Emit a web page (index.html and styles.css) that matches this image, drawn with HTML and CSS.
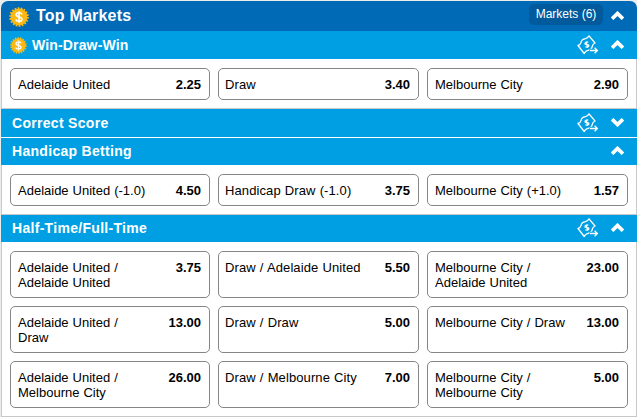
FILE: index.html
```html
<!DOCTYPE html>
<html lang="en">

<head>
    <meta charset="UTF-8">
    <meta name="viewport" content="width=device-width, initial-scale=1.0">
    <title>Top Markets</title>
    <link rel="stylesheet" href="styles.css">
</head>

<body>
    <!-- Shared icons -->
    <svg class="icon-defs" width="0" height="0">
        <symbol id="coin" viewBox="0 0 20 20">
            <circle cx="10" cy="10" r="8.4" fill="#fdb913" />
            <circle cx="10" cy="10" r="8.8" fill="none" stroke="#fdb913" stroke-width="2" stroke-dasharray="1.7 1.37" />
            <path d="M13 7.4C12.6 6.2 11.5 5.7 10 5.7C8.2 5.7 7.1 6.5 7.1 7.8C7.1 10.7 13 9.2 13 12.2C13 13.5 11.8 14.3 10 14.3C8.3 14.3 7.1 13.7 6.8 12.4M10 4.2V15.8" fill="none" stroke="#fff" stroke-width="1.6" />
        </symbol>
        <symbol id="cash" viewBox="0 0 22 20">
            <path d="M1 10.500C5 9.500 3 7 5.500 4.800C8 2.700 10.500 4.500 12 .8L18 8C14 9.500 16.500 12 13.800 14.200C11.300 16.200 8.800 14.500 7.200 18.500Z" fill="none" stroke="#fff" stroke-width="1.300" stroke-linejoin="round" />
            <path d="M11.300 7.300C9.700 6.400 7.400 7.800 8.200 9.100C9 10.300 11.200 8.700 11.800 10.200C12.300 11.600 9.700 12.900 8.400 11.600M8.900 6.700L11 12.800" fill="none" stroke="#fff" stroke-width="1.300" />
            <path d="M12.500 15.500H20.500" fill="none" stroke="#009fe3" stroke-width="3.500" />
            <path d="M13 15.500H20.300M17.600 12.700L20.400 15.500L17.600 18.300" fill="none" stroke="#fff" stroke-width="1.300" />
        </symbol>
        <symbol id="chevron" viewBox="0 0 12 8">
            <path d="M1 7L6 2.100L11 7" fill="none" stroke="#fff" stroke-width="3.400" />
        </symbol>
    </svg>

    <div class="markets">
        <div class="top-bar">
            <svg class="coin coin-large"><use href="#coin" /></svg>
            <h1>Top Markets</h1>
            <span class="count">Markets (6)</span>
            <svg class="chevron"><use href="#chevron" /></svg>
        </div>

        <div class="market-bar first">
            <svg class="coin"><use href="#coin" /></svg>
            <h2>Win-Draw-Win</h2>
            <svg class="cash"><use href="#cash" /></svg>
            <svg class="chevron"><use href="#chevron" /></svg>
        </div>
        <div class="panel">
            <div class="bet"><span>Adelaide United</span><b>2.25</b></div>
            <div class="bet"><span>Draw</span><b>3.40</b></div>
            <div class="bet"><span>Melbourne City</span><b>2.90</b></div>
        </div>

        <div class="market-bar closed">
            <h2>Correct Score</h2>
            <svg class="cash"><use href="#cash" /></svg>
            <svg class="chevron down"><use href="#chevron" /></svg>
        </div>

        <div class="market-bar">
            <h2>Handicap Betting</h2>
            <svg class="chevron"><use href="#chevron" /></svg>
        </div>
        <div class="panel">
            <div class="bet"><span>Adelaide United (-1.0)</span><b>4.50</b></div>
            <div class="bet"><span>Handicap Draw (-1.0)</span><b>3.75</b></div>
            <div class="bet"><span>Melbourne City (+1.0)</span><b>1.57</b></div>
        </div>

        <div class="market-bar">
            <h2>Half-Time/Full-Time</h2>
            <svg class="cash"><use href="#cash" /></svg>
            <svg class="chevron"><use href="#chevron" /></svg>
        </div>
        <div class="panel tall">
            <div class="bet"><span>Adelaide United /<br>Adelaide United</span><b>3.75</b></div>
            <div class="bet"><span>Draw / Adelaide United</span><b>5.50</b></div>
            <div class="bet"><span>Melbourne City /<br>Adelaide United</span><b>23.00</b></div>
            <div class="bet"><span>Adelaide United /<br>Draw</span><b>13.00</b></div>
            <div class="bet"><span>Draw / Draw</span><b>5.00</b></div>
            <div class="bet"><span>Melbourne City / Draw</span><b>13.00</b></div>
            <div class="bet"><span>Adelaide United /<br>Melbourne City</span><b>26.00</b></div>
            <div class="bet"><span>Draw / Melbourne City</span><b>7.00</b></div>
            <div class="bet"><span>Melbourne City /<br>Melbourne City</span><b>5.00</b></div>
        </div>
    </div>
</body>

</html>
```
FILE: styles.css
```css
:root {
    --dark-blue: #006ab6;
    --light-blue: #009fe3;
    --line: #c8c8c8;
    --bet-line: #868686;
}

* {
    box-sizing: border-box;
}

body {
    margin: 0;
    padding: 1px 0 0 1px;
    background-color: #e9edec;
    font-family: "Liberation Sans", Arial, sans-serif;
    color: #000;
    overflow: hidden;
}

.icon-defs {
    display: none;
}

.markets {
    width: 636px;
}

/* Headings */
.top-bar,
.market-bar {
    display: flex;
    align-items: center;
    color: #fff;
}

.top-bar {
    height: 30px;
    padding: 0 13px 0 8px;
    background-color: var(--dark-blue);
    border-radius: 7px 7px 0 0;
}

.market-bar {
    height: 27px;
    padding: 0 13px 1px 11px;
    background-color: var(--light-blue);
}

.market-bar.first {
    height: 28px;
    padding: 0 13px 0 9px;
}

.market-bar.closed {
    height: 29px;
    padding-bottom: 0;
    border-bottom: 1px solid #fff;
}

h1,
h2 {
    flex: 1;
    margin: 0;
    font-weight: bold;
    white-space: nowrap;
}

h1 {
    margin-left: 7px;
    font-size: 16px;
    letter-spacing: 0.2px;
}

h2 {
    font-size: 14px;
    letter-spacing: 0.3px;
}

.first h2 {
    letter-spacing: 0.15px;
}

.count {
    width: 74px;
    height: 21px;
    margin: 0 8px 3px 0;
    border-radius: 5px;
    background-color: #005a9c;
    font-size: 12px;
    line-height: 20px;
    text-align: center;
}

/* Icons */
.coin {
    width: 17px;
    height: 17px;
    margin-right: 5px;
}

.coin-large {
    width: 20px;
    height: 20px;
    margin: 2px 0 0;
}

.cash {
    width: 22px;
    height: 20px;
    margin-right: 12px;
}

.chevron {
    width: 13px;
    height: 9px;
    margin-bottom: 2px;
}

.down {
    transform: rotate(180deg);
}

/* Bets */
.panel {
    display: grid;
    grid-template-columns: 200px 201px 201px;
    grid-auto-rows: 32px;
    gap: 8px;
    height: 50px;
    padding: 9px 0 0 8px;
    background-color: #fff;
    border: 1px solid var(--line);
    border-top: none;
}

.panel.tall {
    height: 175px;
    grid-auto-rows: 47px;
}

.bet {
    display: flex;
    justify-content: space-between;
    padding: 8px 8px 0 7px;
    border: 1px solid var(--bet-line);
    border-radius: 5px;
    font-size: 13px;
    line-height: 15px;
    word-spacing: 0.4px;
    white-space: nowrap;
}

.bet:nth-child(3n + 2) {
    padding-left: 6px;
    letter-spacing: 0.1px;
}

.bet b {
    letter-spacing: 0;
}
```
